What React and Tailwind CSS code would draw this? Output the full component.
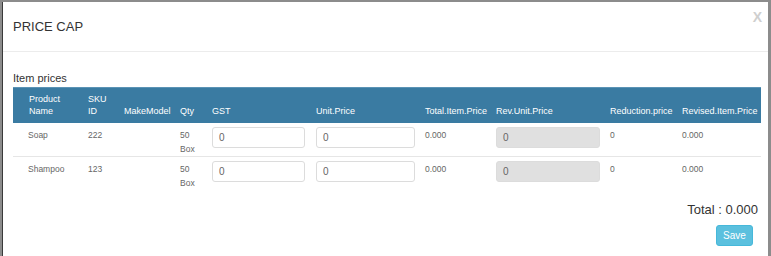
const rows = [
  { name: "Soap", sku: "222", qty: "50", unit: "Box" },
  { name: "Shampoo", sku: "123", qty: "50", unit: "Box" },
];

const cols = [75, 36, 56, 32, 104, 109, 71, 114, 72, 79];

function Field({ disabled }) {
  return (
    <div
      className={
        "h-[21px] rounded-[3px] border border-[#dcdcdc] pl-[6px] flex items-center text-[10px] text-[#666] " +
        (disabled ? "bg-[#e0e0e0] w-[104px]" : "bg-white")
      }
    >
      0
    </div>
  );
}

export default function App() {
  return (
    <div
      className="w-[771px] h-[256px] overflow-hidden bg-[#8c8c8c] pt-[2px] pl-[2px] pr-[3px] text-[#333]"
      style={{ fontFamily: '"Liberation Sans", Arial, sans-serif' }}
    >
      <div className="relative h-[260px] bg-white border-l border-[#3a3a3a]">
        {/* header */}
        <div className="h-[50px] flex items-center pl-[10px] border-b border-[#ececec]">
          <h4 className="text-[13px]">PRICE CAP</h4>
        </div>
        <button className="absolute top-[5px] right-[6px] text-[14px] font-bold text-[#cfcfcf]">
          X
        </button>

        {/* body */}
        <div className="px-[10px] pt-[19px]">
          <div className="text-[11px] leading-[14px]">Item prices</div>
          <table className="mt-[2px] table-fixed border-collapse w-[748px] text-[8.5px]">
            <colgroup>
              {cols.map((w, i) => (
                <col key={i} style={{ width: w }} />
              ))}
            </colgroup>
            <thead className="text-[9px]">
              <tr className="bg-[#3a7ba2] text-white h-[35px] border-t border-[#5b93b5]">
                <th className="pl-[16px] align-bottom text-left font-normal leading-[12px] pb-[6px]">Product<br />Name</th>
                <th className="align-bottom text-left font-normal leading-[12px] pb-[6px]">SKU<br />ID</th>
                <th className="align-bottom text-left font-normal leading-[12px] pb-[6px]">MakeModel</th>
                <th className="align-bottom text-left font-normal leading-[12px] pb-[6px]">Qty</th>
                <th className="align-bottom text-left font-normal leading-[12px] pb-[6px]">GST</th>
                <th className="align-bottom text-left font-normal leading-[12px] pb-[6px]">Unit.Price</th>
                <th className="align-bottom text-left font-normal leading-[12px] pb-[6px]">Total.Item.Price</th>
                <th className="align-bottom text-left font-normal leading-[12px] pb-[6px]">Rev.Unit.Price</th>
                <th className="align-bottom text-left font-normal leading-[12px] pb-[6px]">Reduction.price</th>
                <th className="align-bottom text-left font-normal leading-[12px] pb-[6px]">Revised.Item.Price</th>
              </tr>
            </thead>
            <tbody className="text-[#666]">
              {rows.map((r, i) => (
                <tr key={r.name} className={i === 0 ? "border-b border-[#e6e6e6]" : ""}>
                  <td className="pl-[15px] align-top pt-[5px] pb-[6px] leading-[14px]">{r.name}</td>
                  <td className="align-top pt-[5px] leading-[14px]">{r.sku}</td>
                  <td className="align-top pt-[5px]"></td>
                  <td className="align-top pt-[5px] leading-[14px]">
                    {r.qty}
                    <br />
                    {r.unit}
                  </td>
                  <td className="align-top pt-[4px] pr-[11px]">
                    <Field />
                  </td>
                  <td className="align-top pt-[4px] pr-[10px]">
                    <Field />
                  </td>
                  <td className="align-top pt-[5px] leading-[14px]">0.000</td>
                  <td className="align-top pt-[4px]">
                    <Field disabled />
                  </td>
                  <td className="align-top pt-[5px] leading-[14px]">0</td>
                  <td className="align-top pt-[5px] leading-[14px]">0.000</td>
                </tr>
              ))}
            </tbody>
          </table>

          <div className="mt-[11px] flex flex-col items-end">
            <div className="text-[13px] leading-[18px] text-[#333]">Total : 0.000</div>
            <button className="mt-[6px] mr-[5px] w-[37px] h-[21px] rounded-[3px] bg-[#5bc0de] border border-[#46b8da] text-white text-[10px]">
              Save
            </button>
          </div>
        </div>
      </div>
    </div>
  );
}
